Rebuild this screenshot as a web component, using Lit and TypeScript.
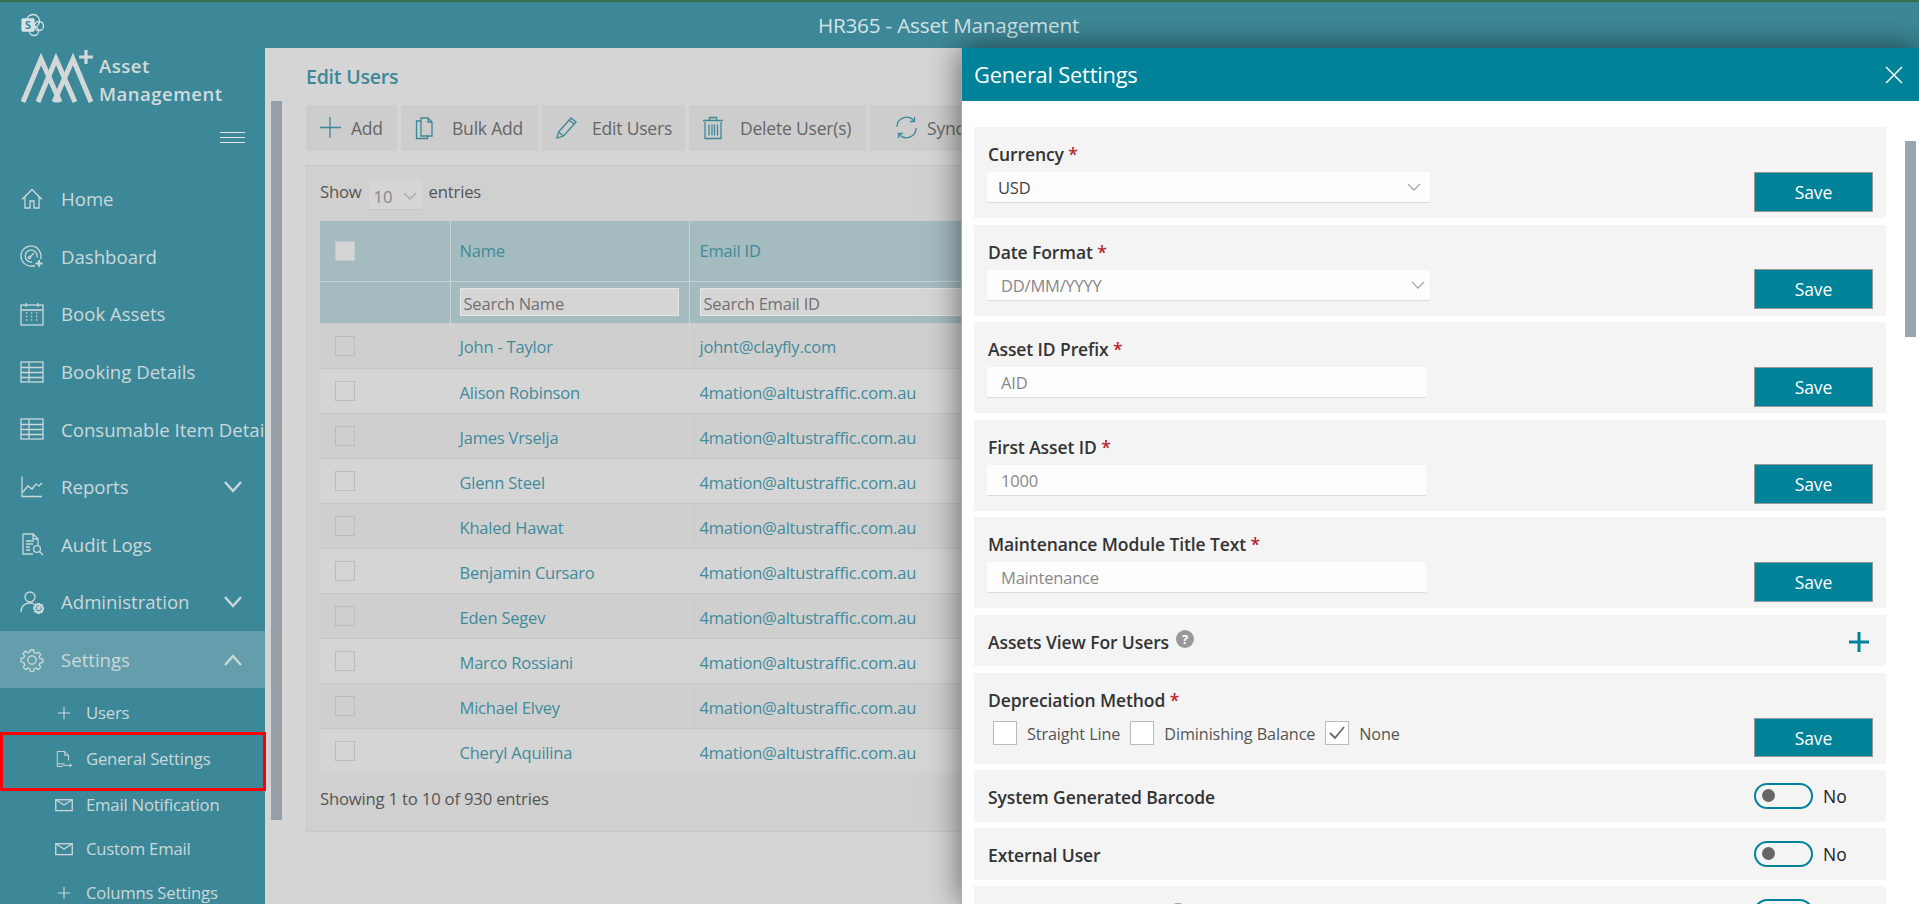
import { LitElement, html, css, svg } from "lit";
import { customElement } from "lit/decorators.js";

const ic = (body: unknown, w = 24, h = 24, vb = "0 0 24 24") => html`<svg class="ic" width=${w} height=${h} viewBox=${vb} fill="none" stroke="currentColor" stroke-width="1.3">${body}</svg>`;

const gearPath = "M10.3 2h3.4l.5 2.8 1.9.8 2.3-1.6 2.4 2.4-1.6 2.3.8 1.9 2.8.5v3.4l-2.8.5-.8 1.9 1.6 2.3-2.4 2.4-2.3-1.6-1.9.8-.5 2.8h-3.4l-.5-2.8-1.9-.8-2.3 1.6-2.4-2.4 1.6-2.3-.8-1.9L1 13.7v-3.4l2.8-.5.8-1.9L3 5.6l2.4-2.4 2.3 1.6 1.9-.8z";

const icons: Record<string, unknown> = {
  home: ic(svg`<path d="M2 12.5 12 2.5l10 10M5 10v11h5v-7h4v7h5V10"/>`),
  dash: ic(svg`<path d="M20.5 15A10 10 0 1 0 12 22h3"/><path d="M17 13.5A6 6 0 1 0 12 18"/><path d="M10 13l4-4"/><circle cx="9.5" cy="13.5" r="1.2"/><path d="M19 16v7M15.5 19.5h7" stroke-width="1.8"/>`),
  cal: ic(svg`<rect x="1" y="3" width="22" height="20"/><path d="M1 8h22M6 1v4M18 1v4"/><path d="M6 11h2M11 11h2M16 11h2M6 14.5h2M11 14.5h2M16 14.5h2M6 18h2M11 18h2M16 18h2" stroke-dasharray="1.2 .8"/>`),
  table: ic(svg`<rect x="1" y="2" width="22" height="20"/><path d="M1 7.5h22M1 12.5h22M1 17.5h22M9 2v20"/>`),
  chart: ic(svg`<path d="M2 1.5V21.5H22M3 17l5-6 4 3 4-5 3 2 3-3"/>`),
  audit: ic(svg`<path d="M3 2h10l5 5v6M13 2v5h5M3 2v20h10M6 9h8M6 12h7M6 15h4M6 18h4"/><circle cx="17" cy="17" r="3.4"/><path d="M19.5 19.5 23 23"/>`),
  admin: ic(svg`<circle cx="10" cy="7" r="5"/><path d="M1 22c0-6 4-9 9-9 1.500 0 3 .3 4 1"/><g transform="translate(13.500 13) scale(.43)" stroke-width="4"><path d=${gearPath}/><circle cx="12" cy="12" r="3"/></g>`),
  gear: ic(svg`<path d=${gearPath}/><circle cx="12" cy="12" r="4.200"/>`),
  plus: ic(svg`<path d="M12 4v16M4 12h16" stroke-width="1.500"/>`, 18, 18),
  doc: ic(svg`<path d="M13 18.500H3V2h10l5 5v7M13 2v5h5M10 20.500h12M19.500 18l2.500 2.500-2.500 2.500" /><path d="M3 18.500V22h7"/>`, 18, 18),
  mail: ic(svg`<rect x="1" y="5" width="22" height="14.500" stroke-width="1.800"/><path d="M1 5l11 7 11-7" stroke-width="1.800"/>`, 18, 18),
};

const chev = (up: boolean) => html`<svg class="chev" width="20" height="14" viewBox="0 0 20 14" fill="none" stroke="currentColor" stroke-width="2.400"><path d=${up ? "M2 12l8-9 8 9" : "M2 2l8 9 8-9"}/></svg>`;

const selChev = html`<svg class="selchev" width="14" height="9" viewBox="0 0 14 9" fill="none" stroke="#aaa" stroke-width="1.300"><path d="M1 1l6 6 6-6"/></svg>`;

const nav = [
  ["home", "Home"],
  ["dash", "Dashboard"],
  ["cal", "Book Assets"],
  ["table", "Booking Details"],
  ["table", "Consumable Item Details"],
  ["chart", "Reports", "down"],
  ["audit", "Audit Logs"],
  ["admin", "Administration", "down"],
  ["gear", "Settings", "up"],
];

const sub = [
  ["plus", "Users", ""],
  ["doc", "General Settings", "tall"],
  ["mail", "Email Notification", ""],
  ["mail", "Custom Email", ""],
  ["plus", "Columns Settings", ""],
];

const tools = [
  ["Add", svg`<path d="M11 1v21M1 11.500h21" stroke-width="1.300"/>`, 91, 13, 10],
  ["Bulk Add", svg`<path d="M7 5h-4.500v17.500h11V20M7 20V2h7l4 4v14z"/><path d="M14 2v4h4"/>`, 137, 13, 16],
  ["Edit Users", svg`<path d="M2 22l1.500-6L16 2l5 4-12.500 14zM3.500 16l5 4M14 4l5 4"/>`, 143, 13, 15],
  ["Delete User(s)", svg`<path d="M3 6v16.500h16V6M1 4.500h20M7.500 4V1.500h7V4M7 8.500v11M10 8.500v11M12.500 8.500v11M15.500 8.500v11"/>`, 177, 13, 16],
  ["Sync", svg`<path d="M2 11a9.500 9.500 0 0 1 17-6M21 12a9.500 9.500 0 0 1-17 6"/><path d="M19.500 1v4.500H15M3.500 22v-4.500H8"/>`, 130, 25, 10],
];

const users = [
  ["John - Taylor", "johnt@clayfly.com"],
  ["Alison Robinson", "4mation@altustraffic.com.au"],
  ["James Vrselja", "4mation@altustraffic.com.au"],
  ["Glenn Steel", "4mation@altustraffic.com.au"],
  ["Khaled Hawat", "4mation@altustraffic.com.au"],
  ["Benjamin Cursaro", "4mation@altustraffic.com.au"],
  ["Eden Segev", "4mation@altustraffic.com.au"],
  ["Marco Rossiani", "4mation@altustraffic.com.au"],
  ["Michael Elvey", "4mation@altustraffic.com.au"],
  ["Cheryl Aquilina", "4mation@altustraffic.com.au"],
];

const saveRows = [
  ["Currency", "USD", "sel dark"],
  ["Date Format", "DD/MM/YYYY", "sel"],
  ["Asset ID Prefix", "AID", ""],
  ["First Asset ID", "1000", ""],
  ["Maintenance Module Title Text", "Maintenance", ""],
];

@customElement("app-root")
export class AppRoot extends LitElement {
  static styles = css`
    :host { display: block; width: 1919px; height: 904px; overflow: hidden; position: relative; font-family: "Open Sans", "Noto Sans", sans-serif; }
    * { box-sizing: border-box; }
    .page { display: flex; flex-direction: column; width: 1919px; height: 904px; background: #d5d5d5; }
    .top { height: 48px; flex: none; display: grid; grid-template-columns: 1fr auto 1fr; align-items: center; background: #3d8898; border-top: 2px solid #3a6e4e; padding-right: 22px; color: #d5e3e6; font-size: 20.700px; letter-spacing: -0.2px; }
    .top svg { margin-left: 21px; display: block; margin-top: -1px; }
    .main { flex: 1; display: flex; min-height: 0; }

    .side { width: 265px; flex: none; background: #3d8898; color: #cbd8da; overflow: hidden; }
    .logo { display: flex; align-items: flex-start; padding-left: 21px; height: 60px; }
    .logo svg { flex: none; margin-top: 2px; }
    .logotext { margin: 4px 0 0 6px; font-size: 18.500px; font-weight: 600; line-height: 28px; color: #d2dcdc; letter-spacing: 0.5px; }
    .burger { margin: 24px 0 27px 220px; width: 25px; height: 11px; display: flex; flex-direction: column; justify-content: space-between; }
    .burger i { display: block; height: 1px; background: #dfe7e8; }
    .item { height: 57.600px; display: flex; align-items: center; padding-left: 20px; white-space: nowrap; font-size: 18.600px; }
    .item .ic { flex: none; margin-right: 17px; }
    .item .chev { margin-left: auto; margin-right: 22px; flex: none; }
    .item.active { background: #649eac; }
    .subs { padding-top: 2.500px; }
    .subitem { height: 44px; display: flex; align-items: center; padding-left: 55px; font-size: 16.700px; letter-spacing: -0.2px; white-space: nowrap; }
    .subitem.tall { height: 48px; }
    .subitem .ic { flex: none; margin-right: 13px; }
    .redbox { position: absolute; left: 0; top: 732px; width: 266px; height: 59px; border: 3px solid #f00; }

    .content { flex: 1; min-width: 0; padding: 16px 0 0 41px; overflow: hidden; position: relative; }
    .sb { position: absolute; left: 6px; top: 53px; width: 11px; height: 719px; background: #979fa6; }
    h1 { margin: 0 0 15px; font-size: 19.500px; line-height: 26px; font-weight: 600; color: #3d8898; letter-spacing: -0.2px; }
    .tools { display: flex; gap: 4px; height: 46px; margin-bottom: 14px; }
    .tool { flex: none; display: flex; align-items: center; background: #cdcdcd; font-size: 17.500px; color: #666; letter-spacing: -0.2px; white-space: nowrap; }
    .tool svg { color: #3d8898; flex: none; }
    .card { width: 800px; height: 667px; background: #d0d0d0; border: 1px solid #c8c8c8; padding: 13px 13px 0; color: #555; font-size: 16.700px; letter-spacing: -0.2px; }
    .show { display: flex; align-items: center; height: 31px; padding-bottom: 6px; margin-bottom: 11px; }
    .numsel { width: 53px; height: 31px; align-self: flex-start; background: #d5d5d5; border-bottom: 1px solid #c6c6c6; margin: 0 7px; padding: 4px 5px 0 5px; display: flex; justify-content: space-between; align-items: center; color: #888; }
    table { border-collapse: collapse; table-layout: fixed; width: 780px; font-size: 16.500px; }
    th, td { padding: 0; text-align: left; font-weight: 400; color: #3f8b9c; }
    .hd th { height: 60px; background: #a4bbc0; border-right: 1px solid #c8d4d6; padding-left: 9px; border-bottom: 1px solid #c8d4d6; }
    .hd th:nth-child(3) { padding-left: 10px; }
    .fl th { height: 42px; background: #a4bbc0; border-right: 1px solid #c8d4d6; padding-left: 9px; }
    .fl th:nth-child(3) { padding-left: 10px; }
    .search { height: 28px; background: #d5d5d5; border: 1px solid #e2e5e5; color: #707070; padding: 3px 3px 0; display: flex; align-items: center; margin-right: 10px; }
    .fl th:nth-child(3) .search { margin-right: 0; }
    .c1 { width: 130px; }
    .c2 { width: 239px; }
    td { height: 45px; padding: 3px 0 0 9px; border-bottom: 1px solid #c6c6c6; border-right: 1px solid #d5d5d5; background: #d5d5d5; }
    td:nth-child(3) { padding-left: 10px; }
    tr.odd td { background: #cfcfcf; }
    tr:last-child td { border-bottom: 0; }
    tr:not(.odd) td { border-right-color: transparent; }
    .cb { display: block; width: 20px; height: 20px; border: 1px solid #bcbcbc; margin: -2.500px 0 0 6px; background: transparent; }
    .hd .cb { background: #d5d5d5; border-color: #c2cccf; margin-top: 0; }
    .foot { padding-top: 16px; line-height: 20px; }

    .panel { position: absolute; left: 961px; top: 48px; width: 958px; height: 856px; background: #fff; box-shadow: 0 0 30px rgba(0,0,0,.55); border-left: 1px solid #aaa; overflow: visible; }
    .phead { height: 53px; background: #008299; color: #fff; display: flex; align-items: center; justify-content: space-between; padding: 0 16px 0 12px; font-size: 21.800px; letter-spacing: -0.2px; }
    .phead svg { display: block; }
    .psb { position: absolute; left: 943px; top: 93px; width: 11px; height: 196px; background: #9aa5ad; }
    .rows { padding: 26px 33px 0 12px; display: flex; flex-direction: column; gap: 6.600px; }
    .row { background: #f4f4f4; padding: 0 13px; display: flex; justify-content: space-between; flex: none; color: #333; }
    .row.form { height: 91px; align-items: flex-end; padding-bottom: 6.500px; }
    .row.line { height: 51.500px; align-items: center; }
    .row.line.first { height: 51px; }
    .label { font-size: 17.500px; font-weight: 600; color: #333; line-height: 22px; padding-left: 1px; letter-spacing: -0.1px; white-space: nowrap; }
    .row.line .label { padding-top: 2px; }
    .req { color: #b3262c; }
    .left { width: 443px; align-self: flex-start; padding-top: 16px; }
    .field { height: 31px; margin-top: 7px; width: 439px; background: #fdfdfd; border-bottom: 1px solid #ddd; display: flex; align-items: center; justify-content: space-between; padding: 1px 5px 0 14px; font-size: 16.500px; color: #888; letter-spacing: -0.2px; }
    .field.sel { width: 443px; }
    .field.dark { color: #444; padding-left: 11px; padding-right: 9px; }
    .save { width: 119px; height: 40px; background: #008299; color: #fff; border: 1px solid #999; display: flex; align-items: center; justify-content: center; font-size: 17.500px; letter-spacing: -0.1px; }
    .row .save.short { height: 39px; }
    .help { display: inline-block; width: 18px; height: 18px; border-radius: 50%; background: #999; color: #fff; font-size: 13px; font-weight: 700; line-height: 18px; text-align: center; vertical-align: 5px; margin-left: 7px; }
    .help.far { display: block; margin: 0 0 0 182px; }
    .plus { width: 22px; height: 22px; display: block; margin: 4px 3px 0 0; }
    .checks { display: flex; align-items: center; margin-top: 10px; padding-left: 6px; font-size: 16.200px; color: #555; letter-spacing: -0.1px; height: 24px; }
    .checks span { padding-top: 3px; }
    .box { width: 24px; height: 24px; border: 1px solid #bbb; background: #fff; flex: none; margin-right: 10px; display: flex; align-items: center; justify-content: center; }
    .checks span + .box { margin-left: 10px; }
    .tog { display: flex; align-items: center; gap: 10px; width: 119px; font-size: 17.500px; color: #222; }
    .sw { width: 59px; height: 25.500px; border: 2px solid #008299; border-radius: 13px; background: #f4f4f4; padding: 4px 0 0 6px; flex: none; }
    .sw i { display: block; width: 13px; height: 13px; border-radius: 50%; background: #666; }
  `;

  private saveBtn(short = false) {
    return html`<div class="save ${short ? "short" : ""}">Save</div>`;
  }

  private toggle(label = "No") {
    return html`<div class="tog"><div class="sw"><i></i></div>${label}</div>`;
  }

  render() {
    return html`
      <div class="page">
        <div class="top">
          <div>
            <svg width="24" height="24" viewBox="0 0 24 24" fill="none" stroke="#d5e3e6" stroke-width="1.300">
              <circle cx="12" cy="8" r="6.500"/><circle cx="18" cy="13" r="4.500"/><circle cx="13" cy="18" r="4.500"/>
              <rect x="1" y="6" width="12" height="12" rx="1" fill="#d5e3e6"/>
              <text x="7" y="15.500" font-size="11" font-weight="700" fill="#3d8898" stroke="none" text-anchor="middle" font-family="Open Sans">S</text>
            </svg>
          </div>
          <div>HR365 - Asset Management</div>
          <div></div>
        </div>
        <div class="main">
          <aside class="side">
            <div class="logo">
              <svg width="72" height="54" viewBox="0 0 72 54" fill="none" stroke="#d2d8d8" stroke-width="5">
                <path d="M2 52 20 9l19 43"/><path d="M17 52 35 9l19 43"/><path d="M33 52 52 9l18 43"/>
                <path d="M65 0v14M58 7h14" stroke-width="3.200"/>
              </svg>
              <div class="logotext">Asset<br/>Management</div>
            </div>
            <div class="burger"><i></i><i></i><i></i></div>
            ${nav.map(([icon, label, dir]) => html`
              <div class="item ${label === "Settings" ? "active" : ""}">
                ${icons[icon]}<span>${label}</span>${dir ? chev(dir === "up") : ""}
              </div>`)}
            <div class="subs">
              ${sub.map(([icon, label, cls]) => html`<div class="subitem ${cls}">${icons[icon]}<span>${label}</span></div>`)}
            </div>
          </aside>
          <section class="content">
            <div class="sb"></div>
            <h1>Edit Users</h1>
            <div class="tools">
              ${tools.map(([label, body, w, pad, gap]) => html`
                <div class="tool" style="width:${w}px;padding-left:${pad}px;gap:${gap}px">
                  <svg width="22" height="24" viewBox="0 0 22 24" fill="none" stroke="currentColor" stroke-width="1.300">${body}</svg>
                  <span>${label}</span>
                </div>`)}
            </div>
            <div class="card">
              <div class="show">Show<div class="numsel">10 ${selChev}</div>entries</div>
              <table>
                <colgroup><col class="c1"/><col class="c2"/><col/></colgroup>
                <tr class="hd"><th><i class="cb"></i></th><th>Name</th><th>Email ID</th></tr>
                <tr class="fl"><th></th><th><div class="search">Search Name</div></th><th><div class="search">Search Email ID</div></th></tr>
                ${users.map(([n, e], i) => html`
                  <tr class=${i % 2 === 0 ? "odd" : ""}><td><i class="cb"></i></td><td>${n}</td><td>${e}</td></tr>`)}
              </table>
              <div class="foot">Showing 1 to 10 of 930 entries</div>
            </div>
          </section>
        </div>
        <div class="redbox"></div>
      </div>
      <div class="panel">
        <div class="phead">
          <span>General Settings</span>
          <svg width="18" height="18" viewBox="0 0 18 18" stroke="#fff" stroke-width="1.500" fill="none"><path d="M1 1l16 16M17 1 1 17"/></svg>
        </div>
        <div class="psb"></div>
        <div class="rows">
          ${saveRows.map(([label, val, cls]) => html`
            <div class="row form">
              <div class="left">
                <div class="label">${label} <span class="req">*</span></div>
                <div class="field ${cls}"><span>${val}</span>${cls.includes("sel") ? selChev : ""}</div>
              </div>
              ${this.saveBtn()}
            </div>`)}
          <div class="row line first">
            <div class="label">Assets View For Users<span class="help">?</span></div>
            <svg class="plus" viewBox="0 0 22 22" stroke="#008299" stroke-width="3" fill="none"><path d="M11 1v20M1 11h20"/></svg>
          </div>
          <div class="row form">
            <div class="left">
              <div class="label">Depreciation Method <span class="req">*</span></div>
              <div class="checks">
                <div class="box"></div><span>Straight Line</span>
                <div class="box"></div><span>Diminishing Balance</span>
                <div class="box"><svg width="16" height="14" viewBox="0 0 16 14" fill="none" stroke="#666" stroke-width="1.800"><path d="M1 7l5 5 9-11"/></svg></div><span>None</span>
              </div>
            </div>
            ${this.saveBtn(true)}
          </div>
          <div class="row line"><div class="label">System Generated Barcode</div>${this.toggle()}</div>
          <div class="row line"><div class="label">External User</div>${this.toggle()}</div>
          <div class="row line"><div class="help far"></div>${this.toggle("")}</div>
        </div>
      </div>
    `;
  }
}
